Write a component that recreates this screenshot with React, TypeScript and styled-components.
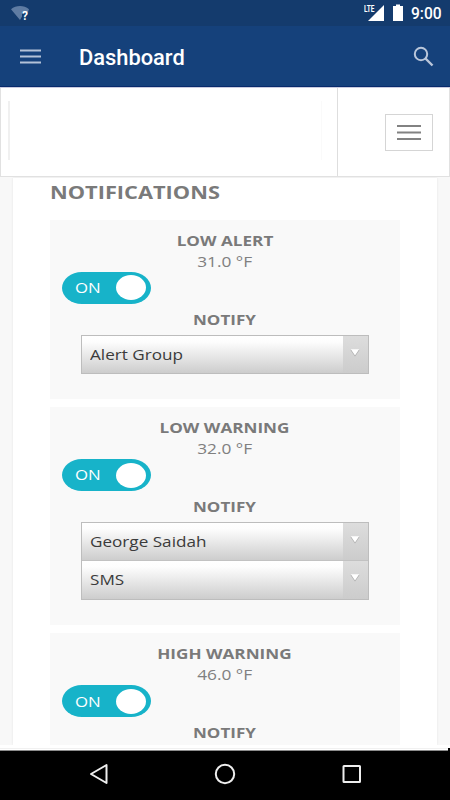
import React from 'react';
import styled, { createGlobalStyle } from 'styled-components';

const Global = createGlobalStyle`
  * { box-sizing: border-box; }
  html, body { margin: 0; padding: 0; background: #000; }
`;

const Screen = styled.div`
  width: 450px;
  height: 800px;
  display: flex;
  flex-direction: column;
  overflow: hidden;
  background: #fff;
  font-family: 'Open Sans', 'Noto Sans', sans-serif;
`;

const StatusBar = styled.div`
  height: 26px;
  flex: none;
  display: flex;
  align-items: flex-start;
  justify-content: space-between;
  background: #143b6d;
`;

const AppBar = styled.header`
  height: 62px;
  flex: none;
  display: flex;
  align-items: flex-start;
  background: #15417b;
  border-bottom: 1px solid #c9cbdf;
  box-shadow: inset 0 -1px 0 #082a6c;
`;

const Clock = styled.span`
  display: block;
  width: 39px;
  padding-top: 4px;
  font: 500 15.6px/20px Roboto, sans-serif;
  color: #fff;
  white-space: nowrap;
`;

const StatusRight = styled.div`
  display: flex;
  width: 86px;
`;

const AppTitle = styled.h1`
  flex: 1;
  margin: 17px 0 0;
  font: 500 22px/30px Roboto, sans-serif;
  color: #fff;
`;

const TopHeader = styled.div`
  height: 89px;
  flex: none;
  display: flex;
  border: solid #e1e1e1;
  border-width: 0 1px 1px 1px;
`;

const LogoCell = styled.div`
  width: 337px;
  padding: 13px 15px 16px 7px;
  border-right: 1px solid #dedede;
`;

const LogoFrame = styled.div`
  height: 59px;
  border-left: 2px solid #f0f0f0;
  border-right: 1px solid #fafafa;
`;

const MenuCell = styled.div`
  flex: 1;
  display: flex;
  justify-content: flex-end;
  padding: 26px 16px 0 0;
`;

const MenuButton = styled.button`
  width: 48px;
  height: 37px;
  padding: 0;
  display: flex;
  align-items: center;
  justify-content: center;
  background: #fff;
  border: 1px solid #d5d5d5;
`;

const Body = styled.main`
  height: 568px;
  flex: none;
  padding: 1px 13px 0;
  background: #f8f8f8;
  overflow: hidden;
`;

const Panel = styled.section`
  height: 567px;
  padding: 0 37px;
  background: #fff;
  box-shadow: 0 0 2px #e4e4e4;
  overflow: hidden;
`;

const Stretch = styled.span<{ $scale: number; $left?: boolean }>`
  display: inline-block;
  white-space: nowrap;
  transform: scaleX(${p => p.$scale});
  transform-origin: ${p => (p.$left ? 'left' : 'center')} center;
`;

const SectionTitle = styled.h2`
  height: 42px;
  margin: 0;
  font-size: 18.6px;
  font-weight: 700;
  line-height: 27px;
  color: #7a7a7a;
`;

const Cards = styled.div`
  display: flex;
  flex-direction: column;
  gap: 8px;
`;

const Card = styled.article<{ $height: number }>`
  height: ${p => p.$height}px;
  flex: none;
  padding: 10px 31px 0 30.5px;
  background: #f9f9f9;
  text-align: center;
`;

const CardTitle = styled.h3`
  margin: 0;
  font-size: 14.9px;
  font-weight: 700;
  line-height: 20.5px;
  color: #7a7a7a;
`;

const Reading = styled.div`
  font-size: 14.9px;
  line-height: 20px;
  color: #808080;
`;

const Toggle = styled.div`
  width: 88.5px;
  height: 32.3px;
  margin: 1.2px 0 4.8px -18.5px;
  padding: 0 5px 0 12.5px;
  display: flex;
  align-items: center;
  justify-content: space-between;
  border-radius: 20px / 16.15px;
  background: #17b3c9;
  color: #fff;
  font-size: 14.9px;
  line-height: 20px;
`;

const ToggleLabel = styled.span`
  padding-bottom: 1.4px;
`;

const Knob = styled.span`
  width: 30px;
  height: 25px;
  border-radius: 50%;
  background: #fff;
`;

const Selects = styled.div`
  margin-top: 5.5px;
  border: 1px solid #bdbdbd;
  text-align: left;
`;

const SelectRow = styled.div`
  height: 37.3px;
  display: flex;
  background: linear-gradient(#fff 0%, #fdfdfd 16%, #cdcdcd 100%);

  & + & {
    height: 39px;
    border-top: 1px solid #c2c2c2;
  }
`;

const SelectText = styled.span`
  flex: 1;
  padding-left: 8.7px;
  font-size: 14.9px;
  line-height: 36.8px;
  color: #3b3b3b;
`;

const Arrow = styled.span`
  width: 25.3px;
  padding-top: 13px;
  display: flex;
  justify-content: center;
  align-items: flex-start;
  background: linear-gradient(#dddddd, #cccccc);
`;

const EdgeStrip = styled.div`
  flex: none;
  background: linear-gradient(#fff 3px, #000 3px);
`;

const BottomEdge = styled.div`
  height: 6px;
  margin-right: 2px;
  border-bottom: 1px solid #8b8b8b;
  background: linear-gradient(#fff 3px, #f1f1f1 3px, #f1f1f1 4px, #fff 4px);
`;

const NavBar = styled.nav`
  flex: 1;
  display: flex;
  justify-content: space-between;
  padding: 11px 86px 0 86px;
  background: #000;
`;

const Icon = styled.svg`
  display: block;
  flex: none;
`;

const AppBarSlot = styled.div<{ $width: number }>`
  width: ${p => p.$width}px;
  flex: none;
`;

interface Alert {
  title: string;
  value: string;
  height: number;
  targets: string[];
}

const alerts: Alert[] = [
  { title: 'LOW ALERT', value: '31.0 °F', height: 179.2, targets: ['Alert Group'] },
  { title: 'LOW WARNING', value: '32.0 °F', height: 218.2, targets: ['George Saidah', 'SMS'] },
  { title: 'HIGH WARNING', value: '46.0 °F', height: 179.2, targets: [] },
];

function AlertCard({ alert }: { alert: Alert }) {
  return (
    <Card $height={alert.height}>
      <CardTitle><Stretch $scale={1.15}>{alert.title}</Stretch></CardTitle>
      <Reading><Stretch $scale={1.16}>{alert.value}</Stretch></Reading>
      <Toggle>
        <ToggleLabel><Stretch $scale={1.13} $left>ON</Stretch></ToggleLabel>
        <Knob />
      </Toggle>
      <CardTitle><Stretch $scale={1.145}>NOTIFY</Stretch></CardTitle>
      {alert.targets.length > 0 && (
        <Selects>
          {alert.targets.map(t => (
            <SelectRow key={t}>
              <SelectText><Stretch $scale={1.15} $left>{t}</Stretch></SelectText>
              <Arrow>
                <Icon width="10" height="8" viewBox="0 0 10 8">
                  <path d="M.5 1h9L5 7.6z" fill="#aaa" />
                  <path d="M.8.3h8.4L5 6.4z" fill="#fff" />
                </Icon>
              </Arrow>
            </SelectRow>
          ))}
        </Selects>
      )}
    </Card>
  );
}

export default function App() {
  return (
    <Screen>
      <Global />
      <StatusBar>
        <Icon width="40" height="26" viewBox="0 0 40 26">
          <path d="M11 9.2C16 4.8 24 4.8 29 9.2l-1 2.8h-6v4.5L20 20z" fill="#5f7ca3" />
          <text x="22" y="19.6" fontFamily="Roboto, sans-serif" fontWeight="700" fontSize="12" fill="#fff">?</text>
        </Icon>
        <StatusRight>
          <Icon width="47" height="26" viewBox="364 0 47 26">
            <text x="364" y="12.4" fontFamily="Roboto, sans-serif" fontWeight="700" fontSize="9.6" fill="#fff" textLength="10.5" lengthAdjust="spacingAndGlyphs">LTE</text>
            <path d="M368 21L384 5v16z" fill="#fff" />
            <path d="M393 6h3V4.6h4V6h3v15h-10z" fill="#fff" />
          </Icon>
          <Clock>9:00</Clock>
        </StatusRight>
      </StatusBar>
      <AppBar>
        <AppBarSlot $width={79}>
          <Icon width="50" height="60" viewBox="0 26 50 60">
            <path d="M20 50.5h21M20 56.5h21M20 62.5h21" stroke="#b3c2d8" strokeWidth="2" />
          </Icon>
        </AppBarSlot>
        <AppTitle><Stretch $scale={0.993} $left>Dashboard</Stretch></AppTitle>
        <AppBarSlot $width={40}>
          <Icon width="40" height="60" viewBox="410 26 40 60" fill="none" stroke="#b9c6da">
            <circle cx="421" cy="54" r="6.2" strokeWidth="2" />
            <path d="M425.5 58.5l7 7" strokeWidth="2.4" />
          </Icon>
        </AppBarSlot>
      </AppBar>
      <TopHeader>
        <LogoCell><LogoFrame /></LogoCell>
        <MenuCell>
          <MenuButton aria-label="Menu">
            <Icon width="24" height="15" viewBox="0 0 24 15">
              <path d="M0 1h24M0 7.5h24M0 14h24" stroke="#828282" strokeWidth="2" />
            </Icon>
          </MenuButton>
        </MenuCell>
      </TopHeader>
      <Body>
        <Panel>
          <SectionTitle><Stretch $scale={1.172} $left>NOTIFICATIONS</Stretch></SectionTitle>
          <Cards>
            {alerts.map(a => <AlertCard key={a.title} alert={a} />)}
          </Cards>
        </Panel>
      </Body>
      <EdgeStrip><BottomEdge /></EdgeStrip>
      <NavBar>
        <Icon width="24" height="24" viewBox="86 762 24 24" fill="none" stroke="#eee" strokeWidth="2" strokeLinejoin="round">
          <path d="M106.5 765v18L91 774z" />
        </Icon>
        <Icon width="24" height="24" viewBox="213 762 24 24" fill="none" stroke="#eee" strokeWidth="2">
          <circle cx="225" cy="774" r="9.2" />
        </Icon>
        <Icon width="24" height="24" viewBox="340 762 24 24" fill="none" stroke="#eee" strokeWidth="2">
          <rect x="343.5" y="766" width="16.5" height="16" rx=".5" />
        </Icon>
      </NavBar>
    </Screen>
  );
}
